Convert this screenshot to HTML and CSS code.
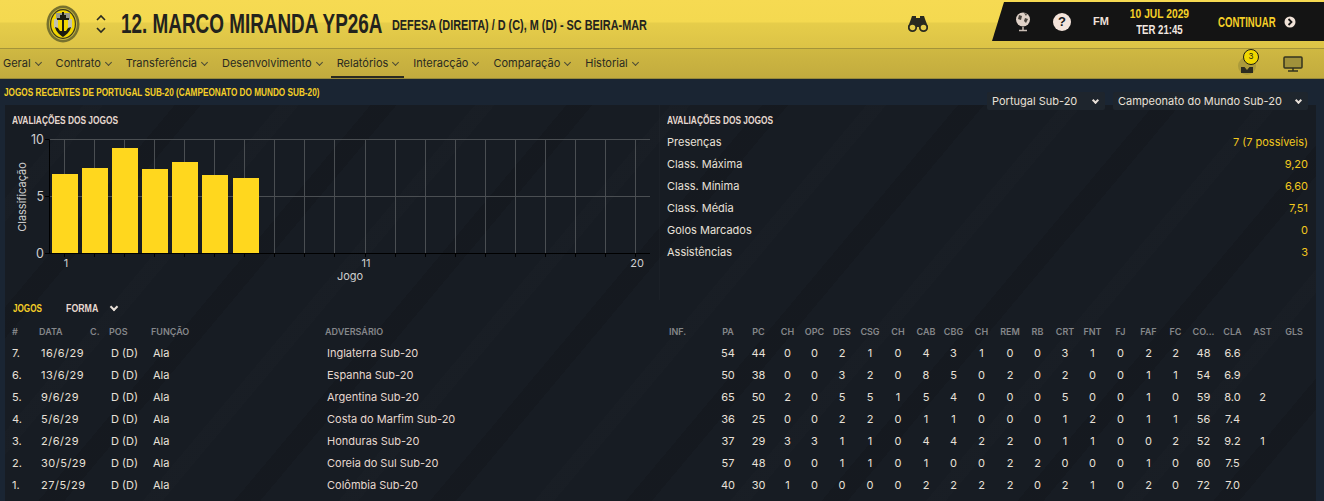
FILE: index.html
```html
<!DOCTYPE html>
<html lang="pt">
<head>
<meta charset="utf-8">
<title>Marco Miranda</title>
<link rel="stylesheet" href="styles.css">
</head>
<body>
<header class="top">
  <svg class="crest" viewBox="0 0 34 38"><ellipse cx="17" cy="19" rx="16.500" ry="18.500" fill="#77712e"/><ellipse cx="17" cy="19" rx="14" ry="16" fill="#c4b43c"/><ellipse cx="17" cy="19" rx="13" ry="15" fill="#3a3618"/><ellipse cx="17" cy="19" rx="11.800" ry="13.800" fill="#f2d600"/><path d="M10 8h14v6H10z" fill="#9a9a8c"/><path d="M8 14h4v9H8zM22 14h4v9h-4z" fill="#c2c1b0"/><path d="M16 7h2v21h-2zM11 13h12v2H11z" fill="#1c1c10"/><path d="M14 10h6v3h-6z" fill="#1c1c10"/><path d="M9 22c1 5 5 8 8 10 3-2 7-5 8-10l-3 1-2 3h-6l-2-3z" fill="#1c1c10"/></svg>
  <svg class="updown" viewBox="0 0 14 28"><path d="M3 10 7 6l4 4M3 18l4 4 4-4" fill="none" stroke="#2a2a22" stroke-width="1.600"/></svg>
  <h1 class="name">12. MARCO MIRANDA YP26A</h1>
  <p class="role">DEFESA (DIREITA) / D (C), M (D) - SC BEIRA-MAR</p>
  <svg class="binoculars" viewBox="0 0 20 18"><path d="M4 1h4v2h4V1h4l1 3 3 8H0l3-8z" fill="#2a2a20"/><circle cx="4.500" cy="12.500" r="3.700" fill="#e6cd4a" stroke="#2a2a20" stroke-width="1.800"/><circle cx="15.500" cy="12.500" r="3.700" fill="#e6cd4a" stroke="#2a2a20" stroke-width="1.800"/><path d="M8 5h4v6H8z" fill="#2a2a20"/></svg>
  <div class="bar">
    <svg class="globe" viewBox="0 0 16 20"><circle cx="8" cy="7.500" r="7" fill="#e0d2c8"/><path d="M4 3l3 1-1 4-3-1zM10 6l3 1-2 4-2-2zM9 1l3 1-1 2z" fill="#4a443e"/><path d="M8 15v3M4 18.500h8" stroke="#c9bdb4" stroke-width="1.500"/></svg>
    <span class="help">?</span>
    <span class="fm">FM</span>
    <div class="clock"><span class="date">10 JUL 2029</span><span class="time">TER 21:45</span></div>
    <span class="go">CONTINUAR</span>
    <svg class="go-icon" viewBox="0 0 12 12"><circle cx="6" cy="6" r="5.500" fill="#f0e2d8"/><path d="M4.500 3 7.500 6l-3 3" fill="none" stroke="#151515" stroke-width="1.800"/></svg>
  </div>
</header>
<nav class="tabs">
  <a class="tab">Geral<i class="car"></i></a>
  <a class="tab">Contrato<i class="car"></i></a>
  <a class="tab">Transferência<i class="car"></i></a>
  <a class="tab">Desenvolvimento<i class="car"></i></a>
  <a class="tab active">Relatórios<i class="car"></i></a>
  <a class="tab">Interacção<i class="car"></i></a>
  <a class="tab">Comparação<i class="car"></i></a>
  <a class="tab">Historial<i class="car"></i></a>
  <div class="tab-icons">
    <span class="report"><svg viewBox="0 0 18 18" class="report-ico"><circle cx="9" cy="8" r="9" fill="#ac9b3b"/><path d="M3 15V9h3.500L9 12l2.500-3H15v6z" fill="#2b2b20"/></svg><b class="badge">3</b></span>
    <svg class="monitor" viewBox="0 0 20 16"><rect x="1" y="1" width="18" height="11" rx="1" fill="#a0913b" stroke="#33331f" stroke-width="1.500"/><path d="M10 12v3M5 15h10" stroke="#33331f" stroke-width="1.500"/></svg>
  </div>
</nav>
<main class="content">
  <div class="filters-row">
    <h2 class="page-title">JOGOS RECENTES DE PORTUGAL SUB-20 (CAMPEONATO DO MUNDO SUB-20)</h2>
  </div>
  <section class="panel">
    <div class="selects">
      <span class="select s1">Portugal Sub-20<i class="car light"></i></span>
      <span class="select s2">Campeonato do Mundo Sub-20<i class="car light"></i></span>
    </div>
    <div class="upper">
      <div class="chart-box">
        <h3 class="label">AVALIAÇÕES DOS JOGOS</h3>
        <svg class="chart" width="646" height="172" viewBox="5 112 646 172">
          <g class="grid">
            <path d="M49.500 139.500H650M49.500 196.500H650"/>
            <path d="M64.500 139.500V253M94.500 139.500V253M124.500 139.500V253M154.500 139.500V253M184.500 139.500V253M214.500 139.500V253M244.500 139.500V253M274.500 139.500V253M304.500 139.500V253M334.500 139.500V253M365.500 139.500V253M395.500 139.500V253M425.500 139.500V253M455.500 139.500V253M485.500 139.500V253M515.500 139.500V253M545.500 139.500V253M575.500 139.500V253M605.500 139.500V253M635.500 139.500V253"/>
          </g>
          <g class="bars">
            <rect x="52" y="174" width="26" height="79"/>
            <rect x="82" y="168" width="26" height="85"/>
            <rect x="112" y="148" width="26" height="105"/>
            <rect x="142" y="169" width="26" height="84"/>
            <rect x="172" y="162" width="26" height="91"/>
            <rect x="202" y="175" width="26" height="78"/>
            <rect x="233" y="178" width="26" height="75"/>
          </g>
          <path class="axis" d="M45 139.500H49.500V253.500M45 196.500H49.500M45 253.500H650M64.500 253V257M94.500 253V257M124.500 253V257M154.500 253V257M184.500 253V257M214.500 253V257M244.500 253V257M274.500 253V257M304.500 253V257M334.500 253V257M365.500 253V257M395.500 253V257M425.500 253V257M455.500 253V257M485.500 253V257M515.500 253V257M545.500 253V257M575.500 253V257M605.500 253V257M635.500 253V257"/>
          <g class="tick">
            <text class="num" x="44" y="144" text-anchor="end">10</text>
            <text class="num" x="44" y="201" text-anchor="end">5</text>
            <text class="num" x="44" y="258" text-anchor="end">0</text>
            <text x="66" y="267" text-anchor="middle">1</text>
            <text x="366" y="267" text-anchor="middle">11</text>
            <text x="637" y="267" text-anchor="middle">20</text>
            <text x="350" y="280" text-anchor="middle">Jogo</text>
            <text transform="translate(26 197) rotate(-90)" text-anchor="middle">Classificação</text>
          </g>
        </svg>
      </div>
      <div class="stats">
        <h3 class="label">AVALIAÇÕES DOS JOGOS</h3>
        <dl class="stat-list">
          <div class="stat"><dt>Presenças</dt><dd>7 (7 possíveis)</dd></div>
          <div class="stat"><dt>Class. Máxima</dt><dd>9,20</dd></div>
          <div class="stat"><dt>Class. Mínima</dt><dd>6,60</dd></div>
          <div class="stat"><dt>Class. Média</dt><dd>7,51</dd></div>
          <div class="stat"><dt>Golos Marcados</dt><dd>0</dd></div>
          <div class="stat"><dt>Assistências</dt><dd>3</dd></div>
        </dl>
      </div>
    </div>
    <div class="games-head"><span class="games-title">JOGOS</span><span class="games-mode"><span class="games-word">FORMA</span><i class="car light"></i></span></div>
    <div class="row head"><span>#</span><span>DATA</span><span>C.</span><span>POS</span><span>FUNÇÃO</span><span>ADVERSÁRIO</span><span>INF.</span><span class="n">PA</span><span class="n">PC</span><span class="n">CH</span><span class="n">OPC</span><span class="n">DES</span><span class="n">CSG</span><span class="n">CH</span><span class="n">CAB</span><span class="n">CBG</span><span class="n">CH</span><span class="n">REM</span><span class="n">RB</span><span class="n">CRT</span><span class="n">FNT</span><span class="n">FJ</span><span class="n">FAF</span><span class="n">FC</span><span class="n">CO...</span><span class="n">CLA</span><span class="n">AST</span><span class="n">GLS</span></div>
    <div class="row"><span>7.</span><span class="i d">16/6/29</span><span></span><span class="i">D (D)</span><span class="i">Ala</span><span class="i opp">Inglaterra Sub-20</span><span></span><span class="n">54</span><span class="n">44</span><span class="n">0</span><span class="n">0</span><span class="n">2</span><span class="n">1</span><span class="n">0</span><span class="n">4</span><span class="n">3</span><span class="n">1</span><span class="n">0</span><span class="n">0</span><span class="n">3</span><span class="n">1</span><span class="n">0</span><span class="n">2</span><span class="n">2</span><span class="n">48</span><span class="n">6.6</span><span class="n"></span><span class="n"></span></div>
    <div class="row"><span>6.</span><span class="i d">13/6/29</span><span></span><span class="i">D (D)</span><span class="i">Ala</span><span class="i opp">Espanha Sub-20</span><span></span><span class="n">50</span><span class="n">38</span><span class="n">0</span><span class="n">0</span><span class="n">3</span><span class="n">2</span><span class="n">0</span><span class="n">8</span><span class="n">5</span><span class="n">0</span><span class="n">2</span><span class="n">0</span><span class="n">2</span><span class="n">0</span><span class="n">0</span><span class="n">1</span><span class="n">1</span><span class="n">54</span><span class="n">6.9</span><span class="n"></span><span class="n"></span></div>
    <div class="row"><span>5.</span><span class="i d">9/6/29</span><span></span><span class="i">D (D)</span><span class="i">Ala</span><span class="i opp">Argentina Sub-20</span><span></span><span class="n">65</span><span class="n">50</span><span class="n">2</span><span class="n">0</span><span class="n">5</span><span class="n">5</span><span class="n">1</span><span class="n">5</span><span class="n">4</span><span class="n">0</span><span class="n">0</span><span class="n">0</span><span class="n">5</span><span class="n">0</span><span class="n">0</span><span class="n">1</span><span class="n">0</span><span class="n">59</span><span class="n">8.0</span><span class="n">2</span><span class="n"></span></div>
    <div class="row"><span>4.</span><span class="i d">5/6/29</span><span></span><span class="i">D (D)</span><span class="i">Ala</span><span class="i opp">Costa do Marfim Sub-20</span><span></span><span class="n">36</span><span class="n">25</span><span class="n">0</span><span class="n">0</span><span class="n">2</span><span class="n">2</span><span class="n">0</span><span class="n">1</span><span class="n">1</span><span class="n">0</span><span class="n">0</span><span class="n">0</span><span class="n">1</span><span class="n">2</span><span class="n">0</span><span class="n">1</span><span class="n">1</span><span class="n">56</span><span class="n">7.4</span><span class="n"></span><span class="n"></span></div>
    <div class="row"><span>3.</span><span class="i d">2/6/29</span><span></span><span class="i">D (D)</span><span class="i">Ala</span><span class="i opp">Honduras Sub-20</span><span></span><span class="n">37</span><span class="n">29</span><span class="n">3</span><span class="n">3</span><span class="n">1</span><span class="n">1</span><span class="n">0</span><span class="n">4</span><span class="n">4</span><span class="n">2</span><span class="n">2</span><span class="n">0</span><span class="n">1</span><span class="n">1</span><span class="n">0</span><span class="n">0</span><span class="n">2</span><span class="n">52</span><span class="n">9.2</span><span class="n">1</span><span class="n"></span></div>
    <div class="row"><span>2.</span><span class="i d">30/5/29</span><span></span><span class="i">D (D)</span><span class="i">Ala</span><span class="i opp">Coreia do Sul Sub-20</span><span></span><span class="n">57</span><span class="n">48</span><span class="n">0</span><span class="n">0</span><span class="n">1</span><span class="n">1</span><span class="n">0</span><span class="n">1</span><span class="n">0</span><span class="n">0</span><span class="n">2</span><span class="n">2</span><span class="n">0</span><span class="n">0</span><span class="n">0</span><span class="n">1</span><span class="n">0</span><span class="n">60</span><span class="n">7.5</span><span class="n"></span><span class="n"></span></div>
    <div class="row"><span>1.</span><span class="i d">27/5/29</span><span></span><span class="i">D (D)</span><span class="i">Ala</span><span class="i opp">Colômbia Sub-20</span><span></span><span class="n">40</span><span class="n">30</span><span class="n">1</span><span class="n">0</span><span class="n">0</span><span class="n">0</span><span class="n">0</span><span class="n">2</span><span class="n">2</span><span class="n">2</span><span class="n">2</span><span class="n">0</span><span class="n">2</span><span class="n">1</span><span class="n">0</span><span class="n">2</span><span class="n">0</span><span class="n">72</span><span class="n">7.0</span><span class="n"></span><span class="n"></span></div>
  </section>
</main>
</body>
</html>
```
FILE: styles.css
```css
* { box-sizing: border-box; }
html, body { margin: 0; height: 501px; overflow: hidden; }
body { font: 11px/1 Inter, "Liberation Sans", sans-serif; background: #1a2533; color: #e8e0d8; width: 1324px; }
h1, h2, h3, p, dl, dd { margin: 0; font-weight: normal; }

.top { height: 48px; display: flex; align-items: center; background: linear-gradient(#f6da52 0, #f4d950 22px, #e6cd4a 23px, #dcc346 48px); position: relative; }
.crest { width: 34px; height: 38px; margin-left: 46px; flex: none; }
.updown { width: 14px; height: 28px; margin-left: 14px; flex: none; }
.name, .role, .date, .time, .go, .page-title, .label, .games-title, .games-word { font-family: "Liberation Sans", sans-serif; font-weight: bold; white-space: nowrap; line-height: 1; transform-origin: left center; }
.name { font-size: 28px; color: #23231d; margin-left: 13px; width: 261px; transform: scaleX(.675); flex: none; }
.role { font-size: 15px; color: #23231d; margin-left: 10px; transform: scaleX(.725); flex: none; }
.binoculars { width: 20px; height: 18px; position: absolute; left: 908px; top: 15px; }
.bar { position: absolute; left: 992px; top: 2px; width: 332px; height: 39px; background: #141414; clip-path: polygon(12px 0, 100% 0, 100% 100%, 0 100%); display: flex; align-items: center; }
.globe { width: 16px; height: 20px; margin-left: 23px; flex: none; }
.help { width: 18px; height: 18px; border-radius: 50%; background: #f3e3da; color: #171717; font: bold 13px/18px "Liberation Sans", sans-serif; text-align: center; margin-left: 22px; flex: none; }
.fm { font: 900 11px/1 "Liberation Sans", sans-serif; color: #efe0d8; margin-left: 22px; width: 18px; flex: none; }
.clock { display: flex; flex-direction: column; align-items: center; width: 70px; margin-left: 13px; gap: 3px; flex: none; }
.date { color: #f5cf27; font-size: 13px; transform: scaleX(.79); transform-origin: center; }
.time { color: #f3e8e0; font-size: 13px; transform: scaleX(.74); transform-origin: center; }
.go { font-size: 15px; color: #f5cf27; margin-left: 24px; width: 58px; transform: scaleX(.64); flex: none; }
.go-icon { width: 12px; height: 12px; margin-left: 8px; flex: none; }

.tabs { height: 31px; display: flex; background: linear-gradient(#cfb842, #c2ab3e); border-top: 1px solid #a3933a; border-bottom: 1px solid #97893a; position: relative; }
.tab { color: #2a2a20; font-size: 11px; display: flex; align-items: center; height: 29px; padding: 0 6px; margin-right: 3px; white-space: nowrap; }
.tab:first-child { margin-left: -3px; }
.tab.active { box-shadow: inset 0 -2px 0 #2a2a20; }
.car { width: 5px; height: 5px; border-right: 1px solid #4a4a35; border-bottom: 1px solid #4a4a35; transform: rotate(45deg); margin: -2px 0 0 5px; flex: none; }
.car.light { border-color: #e8e0d8; width: 6px; height: 6px; border-width: 2px; margin-left: 8px; }
.tab-icons { margin-left: auto; display: flex; align-items: center; gap: 23px; padding-right: 21px; }
.report { position: relative; width: 16px; height: 20px; display: block; }
.report-ico { width: 18px; height: 18px; position: absolute; left: -6px; top: 4px; }
.badge { position: absolute; left: -1px; top: -5px; width: 16px; height: 16px; border-radius: 50%; background: #f0d800; border: 1.500px solid #1d1d10; color: #1d1d10; font: 8px/13px Inter, sans-serif; text-align: center; }
.monitor { width: 20px; height: 16px; }

.content { height: 422px; position: relative; }
.filters-row { height: 26px; display: flex; align-items: center; padding-left: 4px; }
.page-title { font-size: 11px; color: #f5cf27; transform: scaleX(.747); }
.panel { position: absolute; left: 5px; right: 8px; top: 26px; bottom: 0; background-color: #171c23;
  background-image: repeating-linear-gradient(130deg, transparent 0 60px, rgba(255,255,255,.008) 60px 75px, transparent 75px 130px, rgba(0,0,0,.1) 130px 150px); }
.selects { position: absolute; top: -13px; right: 8px; display: flex; gap: 8px; }
.select { height: 18px; background: #1e252d; border-radius: 2px; display: flex; align-items: center; justify-content: space-between; padding: 0 7px 0 5px; font-size: 11px; white-space: nowrap; }
.s1 { width: 118px; }
.s2 { width: 195px; }
.select .car { width: 5px; height: 5px; margin-left: 0; }
.upper { display: flex; height: 195px; }
.chart-box { width: 655px; position: relative; border-right: 1px solid rgba(255,255,255,.02); }
.label { font-size: 11px; color: #e6d8cf; margin-left: 7px; padding-top: 10px; height: 21px; transform: scaleX(.76); }
.chart { display: block; position: absolute; left: 0; top: 7px; }
.grid path { stroke: #4a4e52; stroke-width: 1; fill: none; }
.bars rect { fill: #ffd71e; }
.axis { stroke: #000; stroke-width: 1; fill: none; }
.tick text { font: 11px Inter, sans-serif; fill: #cfcfcf; }
.tick .num { font-size: 12.500px; }
.stats { flex: 1; padding-right: 8px; }
.stat-list { padding: 5px 0 0 7px; }
.stat { display: flex; justify-content: space-between; height: 22px; align-items: center; }
.stat dd { color: #f2c81e; }
.games-head { display: flex; align-items: center; height: 14px; padding-left: 8px; margin-top: 1px; }
.games-title { font-size: 11px; color: #f5cf27; width: 53px; transform: scaleX(.74); flex: none; }
.games-mode { display: flex; align-items: center; }
.games-word { font-size: 11px; color: #e6d8cf; width: 45px; transform: scaleX(.8); }
.games-word + .car { margin-left: 0; }
.row { display: grid; grid-template-columns: 27px 51px 19px 42px 174px 344px 44px 30px 31px 27px 27px 28px 28px 28px 28px 27px 29px 28px 27px 28px 27px 29px 27px 27px 29px 29px 31px 32px; padding-left: 7px; height: 22.100px; align-items: center; white-space: nowrap; }
.row.head { height: 21px; margin-top: 6px; font-weight: 600; font-size: 9px; color: #85878a; }
.row .i { padding-left: 2px; }
.row .d { letter-spacing: .5px; }
.row .n { text-align: center; }
.row .opp { color: #e6d8cf; }
```
